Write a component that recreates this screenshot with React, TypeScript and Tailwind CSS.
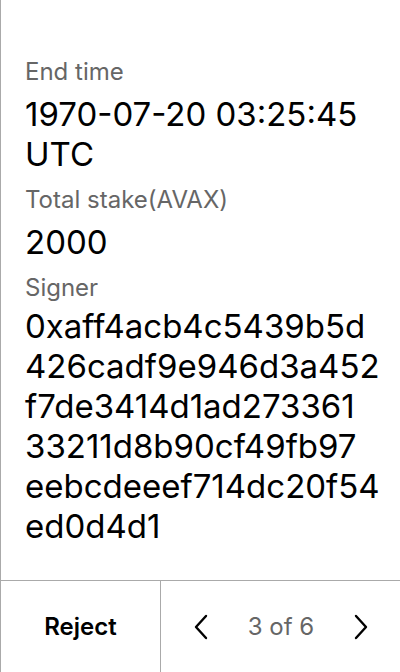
import React from "react";

const Label = ({ children }: { children: React.ReactNode }) => (
  <div className="text-[24px] leading-7 text-[#666666]">{children}</div>
);

const Value = ({ children }: { children: React.ReactNode }) => (
  <div className="text-[33px] leading-10 text-black">{children}</div>
);

const Chevron = ({ dir }: { dir: "left" | "right" }) => (
  <svg width="14" height="26" viewBox="0 0 14 26" fill="none">
    <path
      d={dir === "left" ? "M12 2 L2 13 L12 24" : "M2 2 L12 13 L2 24"}
      stroke="black"
      strokeWidth="2.4"
      strokeLinecap="round"
      strokeLinejoin="round"
    />
  </svg>
);

const signerLines = [
  "0xaff4acb4c5439b5d",
  "426cadf9e946d3a452",
  "f7de3414d1ad273361",
  "33211d8b90cf49fb97",
  "eebcdeeef714dc20f54",
  "ed0d4d1",
];

const App = () => {
  return (
    <div
      className="w-[400px] h-[672px] flex flex-col bg-white border-l border-[#aaaaaa]"
      style={{ fontFamily: "Inter, 'Noto Sans', sans-serif" }}
    >
      <div className="flex-1 flex flex-col gap-3 pl-6 pr-4 pt-[58px]">
        <div className="flex flex-col gap-2">
          <Label>End time</Label>
          <Value>
            1970-07-20 03:25:45
            <br />
            UTC
          </Value>
        </div>
        <div className="flex flex-col gap-2">
          <Label>Total stake(AVAX)</Label>
          <Value>2000</Value>
        </div>
        <div className="flex flex-col gap-1">
          <Label>Signer</Label>
          <Value>
            {signerLines.map((l) => (
              <div key={l}>{l}</div>
            ))}
          </Value>
        </div>
      </div>
      <div className="h-[92px] flex border-t border-[#aaaaaa]">
        <button className="w-[160px] border-r border-[#aaaaaa] flex items-center justify-center text-[24px] font-semibold text-black">
          Reject
        </button>
        <div className="flex-1 flex items-center justify-between pl-[33px] pr-[32px]">
          <Chevron dir="left" />
          <span className="text-[24px] text-[#666666]">3 of 6</span>
          <Chevron dir="right" />
        </div>
      </div>
    </div>
  );
};

export default App;
